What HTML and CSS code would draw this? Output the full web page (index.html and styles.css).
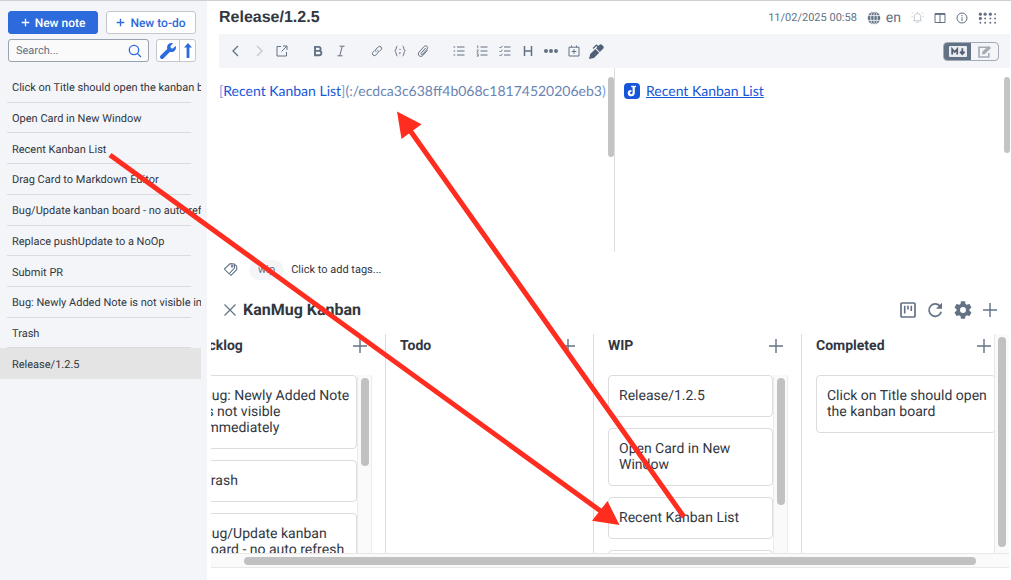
FILE: index.html
```html
<!DOCTYPE html>
<html lang="en">
<head>
<meta charset="utf-8">
<title>Release/1.2.5</title>
<link rel="stylesheet" href="styles.css">
</head>
<body>
<div class="app">
  <aside class="sidebar">
    <div class="new-row">
      <button class="btn primary"><svg viewBox="0 0 10 10"><path d="M5 .8v8.4M.8 5h8.4"/></svg>New note</button>
      <button class="btn"><svg viewBox="0 0 10 10"><path d="M5 .8v8.4M.8 5h8.4"/></svg>New to-do</button>
    </div>
    <div class="search-row">
      <label class="search">
        <input type="text" placeholder="Search..." aria-label="Search">
        <svg viewBox="0 0 14 14"><circle cx="6" cy="6" r="4.7"/><path d="M9.4 9.4l3.6 3.6"/></svg>
      </label>
      <div class="sort">
        <button aria-label="Sort field"><svg class="wrench" viewBox="0 0 512 512"><path d="M507.730 109.100c-2.240-9.030-13.540-12.090-20.120-5.510l-74.360 74.360-67.880-11.310-11.310-67.880 74.360-74.360c6.620-6.620 3.430-17.900-5.660-20.160-47.380-11.740-99.550.91-136.580 37.930-39.640 39.640-50.550 97.100-34.050 147.200L18.740 402.760c-24.990 24.990-24.990 65.510 0 90.500s65.510 24.990 90.500 0l213.210-213.210c50.120 16.710 107.470 5.680 147.370-34.220 37.070-37.070 49.700-89.320 37.910-136.730z"/></svg></button>
        <button aria-label="Reverse sort order"><svg class="up" viewBox="0 0 8 15"><path d="M4 0l4 4.600H5.400V15H2.600V4.600H0z"/></svg></button>
      </div>
    </div>
    <nav class="notes">
      <a href="#"><span>Click on Title should open the kanban board</span></a>
      <a href="#"><span>Open Card in New Window</span></a>
      <a href="#"><span>Recent Kanban List</span></a>
      <a href="#"><span>Drag Card to Markdown Editor</span></a>
      <a href="#"><span>Bug/Update kanban board - no auto refresh</span></a>
      <a href="#"><span>Replace pushUpdate to a NoOp</span></a>
      <a href="#"><span>Submit PR</span></a>
      <a href="#"><span>Bug: Newly Added Note is not visible immediately</span></a>
      <a href="#"><span>Trash</span></a>
      <a href="#" class="selected"><span>Release/1.2.5</span></a>
    </nav>
  </aside>

  <main class="main">
    <header class="title-row">
      <h1>Release/1.2.5</h1>
      <div class="meta">
        <time>11/02/2025 00:58</time>
        <button class="lang"><svg class="globe" viewBox="0 0 14 14"><circle cx="7" cy="7" r="6.700" fill="#627184"/><path d="M7 0v14M0 4.600h14M0 9.400h14" /><ellipse cx="7" cy="7" rx="3.300" ry="6.800"/></svg>en</button>
        <button class="bell" aria-label="Alarm"><svg viewBox="0 0 14 14"><path d="M2.500 10.500h9M3.600 10.500V6a3.400 3.400 0 0 1 6.800 0v4.500M7 2.500V1.300M5.900 11.500a1.100 1.100 0 0 0 2.200 0M2.300 1.500L1 3M11.700 1.500L13 3M1.200 5.200v1.500M12.800 5.200v1.500"/></svg></button>
        <button aria-label="Toggle layout"><svg viewBox="0 0 12 12"><path d="M1 1.500h10v9H1zM6 1.500v9M1 2.400h10"/></svg></button>
        <button aria-label="Note properties"><svg viewBox="0 0 12 12"><circle cx="6" cy="6" r="5"/><path d="M6 5.300V9M6 3v1.300"/></svg></button>
        <button class="dots" aria-label="Plugins"><svg viewBox="0 0 20 12"><g fill="#627184" stroke="none"><circle cx="2.500" cy="2" r="1.700"/><circle cx="7.500" cy="2" r="1.700"/><circle cx="13" cy="2" r="1.700"/><circle cx="18" cy="2" r="1"/><circle cx="2.500" cy="6.500" r="1.700"/><circle cx="7.500" cy="6.500" r="1"/><circle cx="13" cy="6.500" r="1"/><circle cx="18" cy="6.500" r="1"/><circle cx="2.500" cy="11" r="1"/><circle cx="7.500" cy="11" r="1"/><circle cx="13" cy="11" r="1"/><circle cx="18" cy="11" r="1"/></g></svg></button>
      </div>
    </header>

    <div class="toolbar">
      <div class="group">
        <button aria-label="Back"><svg viewBox="0 0 12 12"><path stroke-width="1.300" d="M8 1L3 6l5 5"/></svg></button>
        <button class="off" aria-label="Forward"><svg viewBox="0 0 12 12"><path stroke-width="1.300" d="M4 1l5 5-5 5"/></svg></button>
        <button aria-label="External editing"><svg viewBox="0 0 12 12"><path d="M5 1.500H1v9.500h9.500V7M7 1h4v4M11 1L5.500 6.500"/></svg></button>
      </div>
      <div class="group">
        <button aria-label="Bold"><svg viewBox="0 0 12 12"><path stroke-width="1.900" d="M3 1.900h3.600a2 2 0 0 1 0 4H3zM3 5.900h4.200a2.100 2.100 0 0 1 0 4.300H3z"/></svg></button>
        <button aria-label="Italic"><svg viewBox="0 0 12 12"><path d="M4.500 1.200h5M2.500 10.800h5M7.300 1.200L4.700 10.800"/></svg></button>
      </div>
      <div class="group">
        <button aria-label="Hyperlink"><svg viewBox="0 0 12 12"><path d="M5.200 6.800a2 2 0 0 1 0-2.800l2.200-2.200a2 2 0 0 1 2.800 2.800L8.300 6.500M6.800 5.200a2 2 0 0 1 0 2.800l-2.200 2.200a2 2 0 0 1-2.800-2.800l1.900-1.900"/></svg></button>
        <button aria-label="Code"><svg viewBox="0 0 12 12"><path d="M3.500 1C1.500 1 3 5.200.700 6 3 6.800 1.500 11 3.500 11M8.500 1c2 0 .5 4.200 2.800 5-2.300.8-.8 5-2.800 5M6 3.800v1.200M6 7v1.200l-.6 1"/></svg></button>
        <button aria-label="Attach file"><svg viewBox="0 0 12 12"><path d="M8.700 3L4.200 8.100a.9.900 0 0 0 1.400 1.200l4.700-5.400A2 2 0 0 0 7.300 1.300L2 7.200a2.500 2.500 0 0 0 3.700 3.400l4.800-5.400"/></svg></button>
      </div>
      <div class="group">
        <button aria-label="Bulleted list"><svg viewBox="0 0 12 12"><path d="M4 2h7.500M4 6h7.500M4 10h7.500M.5 2h1.700M.5 6h1.700M.5 10h1.700"/></svg></button>
        <button aria-label="Numbered list"><svg viewBox="0 0 12 12"><path d="M4.500 2h7M4.500 6h7M4.500 10h7"/><path stroke-width=".8" d="M1 .8h.8v2.400M.8 4.900h1.400v1L.8 7.200h1.600M.8 8.900h1.400v2.300H.8M1.200 10h1"/></svg></button>
        <button aria-label="Checkbox list"><svg viewBox="0 0 12 12"><path d="M5 2h6.500M5 6h6.500M5 10h6.500M.5 2l1 1 2-2.200M.5 6l1 1 2-2.200M.5 10l1 1 2-2.200"/></svg></button>
        <button aria-label="Heading"><svg viewBox="0 0 12 12"><path stroke-width="1.500" d="M2.500 1v10M9.500 1v10M2.500 6h7"/></svg></button>
        <button aria-label="Horizontal rule"><svg class="wide" viewBox="0 0 14 12"><g fill="#627184" stroke="none"><circle cx="2" cy="6" r="2"/><circle cx="7" cy="6" r="2"/><circle cx="12" cy="6" r="2"/></g></svg></button>
        <button aria-label="Insert time"><svg viewBox="0 0 12 12"><path d="M1 2.200h10V11H1zM3.500.5v1.700M8.500.5v1.700M6 4.200v4.600M3.700 6.500h4.600"/></svg></button>
        <button aria-label="Edit drawing"><svg class="marker" viewBox="0 0 15 15"><path fill="#4f6177" stroke="none" d="M0 15l1.200-5L6.300 4.900l3.900 3.900L5 13.900zM7 4.200l1.300-1.300-.9-.9-2.900 2.900-.9-.9L6.900.7a.8.800 0 0 1 1.100 0l1.300 1.200 1-1a2 2 0 0 1 2.800 0l1 1a2 2 0 0 1 0 2.800l-3.200 3.400z"/></svg></button>
      </div>
      <div class="toggle">
        <button class="on" aria-label="Markdown editor"><svg viewBox="0 0 18 11"><rect width="18" height="11" rx="1" fill="#e9edf2"/><path stroke="#536173" stroke-width="1.800" d="M3.200 8.500V3.200L5.700 6l2.500-2.800v5.300M13.300 2.300v5.500M11 5.700l2.300 2.500 2.300-2.500"/></svg></button>
        <button aria-label="Rich text editor"><svg viewBox="0 0 14 13"><path stroke="#a4abb6" stroke-width="1.600" d="M9 2.200H1v9.800h9.800V8"/><path fill="#a4abb6" d="M4 9.500l.5-3L10.500.700l2.500 2.400-6 5.900z"/></svg></button>
      </div>
    </div>

    <section class="panes">
      <div class="pane source">
        <p><span class="br">[</span><span class="lk">Recent Kanban List</span><span class="br">]</span><span class="url">(:/ecdca3c638ff4b068c18174520206eb3</span><span class="br">)</span></p>
        <i class="thumb"></i>
      </div>
      <div class="pane preview">
        <p><svg class="joplin" viewBox="0 0 16 16"><rect width="16" height="16" rx="4" fill="#1656d8"/><path fill="none" stroke="#fff" stroke-width="2.200" d="M9.700 3.500v6.300c0 3.200-4.700 3.200-4.900.4 0-1.600 1.200-2.300 2.600-2.200"/><path stroke="#fff" stroke-width="1.400" d="M7.200 3.500h4.800"/></svg><a href="#">Recent Kanban List</a></p>
        <i class="thumb"></i>
      </div>
    </section>

    <div class="tags">
      <svg viewBox="0 0 14 14"><path d="M1.500 6.300L6.800 1.500l3.700.3.300 3.700L5.700 11 1.500 6.800zM11 2.500l1.700 1.200.2 3.300-5.400 5.500-1.200-1"/><circle cx="8.500" cy="4" r=".7"/></svg>
      <span class="tag">wip</span>
      <button>Click to add tags...</button>
    </div>

    <section class="kanban">
      <header class="kb-head">
        <button aria-label="Close"><svg class="x" viewBox="0 0 14 14"><path d="M1.500 1.500l11 11M12.500 1.500l-11 11"/></svg></button>
        <h2>KanMug Kanban</h2>
        <div class="kb-actions">
          <button aria-label="Boards"><svg viewBox="0 0 16 16"><rect x="1" y="1" width="14" height="14" rx="1" stroke-width="1.700"/><path stroke-width="1.600" d="M4.700 3.800v7.800M8 3.800v3.600M11.300 3.800v5.200"/></svg></button>
          <button aria-label="Refresh"><svg viewBox="0 0 16 16"><path stroke-width="1.700" d="M13.300 4.500A6.200 6.200 0 1 0 14.200 9.800"/><path fill="#627184" stroke="none" d="M15 .8v6H9z"/></svg></button>
          <button aria-label="Settings"><svg class="gear" viewBox="2 2 20 20"><path fill="#627184" stroke="none" d="M19.140 12.940c.04-.3.06-.61.06-.94s-.02-.64-.07-.94l2.030-1.580a.49.490 0 0 0 .12-.61l-1.920-3.320a.49.490 0 0 0-.59-.22l-2.390.96c-.5-.38-1.030-.7-1.620-.94l-.36-2.540a.48.480 0 0 0-.48-.41h-3.840c-.24 0-.43.17-.47.41l-.36 2.540c-.59.24-1.130.57-1.620.94l-2.390-.96a.48.480 0 0 0-.59.22L2.740 8.870c-.12.21-.08.47.12.61l2.030 1.580c-.05.3-.09.63-.09.94s.02.64.07.94l-2.030 1.580a.49.490 0 0 0-.12.61l1.920 3.320c.12.22.37.29.59.22l2.390-.96c.5.38 1.030.7 1.620.94l.36 2.540c.05.24.24.41.48.41h3.840c.24 0 .44-.17.47-.41l.36-2.540c.59-.24 1.130-.56 1.620-.94l2.390.96c.22.080.47 0 .59-.22l1.920-3.320a.48.480 0 0 0-.12-.61zM12 15.300a3.300 3.300 0 1 1 0-6.600 3.300 3.300 0 0 1 0 6.600z"/></svg></button>
          <button aria-label="Add"><svg viewBox="0 0 14 14"><path d="M7 0v14M0 7h14"/></svg></button>
        </div>
      </header>
      <div class="board-wrap">
        <div class="board">
          <div class="cols">
            <section class="col">
              <header><h3>Backlog</h3><button aria-label="Add card"><svg viewBox="0 0 14 14"><path d="M7 0v14M0 7h14"/></svg></button></header>
              <div class="cards scroll">
                <div class="stack">
                  <article>Bug: Newly Added Note is not visible immediately</article>
                  <article>Trash</article>
                  <article>Bug/Update kanban board - no auto refresh</article>
                </div>
                <div class="track"><i class="short"></i></div>
              </div>
            </section>
            <section class="col">
              <header><h3>Todo</h3><button aria-label="Add card"><svg viewBox="0 0 14 14"><path d="M7 0v14M0 7h14"/></svg></button></header>
            </section>
            <section class="col">
              <header><h3>WIP</h3><button aria-label="Add card"><svg viewBox="0 0 14 14"><path d="M7 0v14M0 7h14"/></svg></button></header>
              <div class="cards scroll">
                <div class="stack">
                  <article>Release/1.2.5</article>
                  <article>Open Card in New Window</article>
                  <article>Recent Kanban List</article>
                  <article>Drag Card to Markdown Editor</article>
                </div>
                <div class="track"><i class="long"></i></div>
              </div>
            </section>
            <section class="col">
              <header><h3>Completed</h3><button aria-label="Add card"><svg viewBox="0 0 14 14"><path d="M7 0v14M0 7h14"/></svg></button></header>
              <div class="cards">
                <div class="stack"><article>Click on Title should open the kanban board</article></div>
              </div>
            </section>
          </div>
        </div>
        <div class="vbar"><i></i></div>
        <div class="hbar"><i></i></div>
      </div>
    </section>
  </main>

  <svg class="arrows" viewBox="0 0 1011 580" preserveAspectRatio="xMinYMin meet">
    <path class="shaft" d="M110 155L602 512M684 517L409 129"/>
    <path class="head" d="M619.500 525L592 520.700 607.500 501zM397 111.500L421.500 124.300 401.500 139z"/>
  </svg>
</div>
</body>
</html>
```
FILE: styles.css
```css
* { box-sizing: border-box; }
body { margin: 0; background: #fff; color: #32373f; font-family: Roboto, "Liberation Sans", sans-serif; font-size: 14px; text-rendering: geometricPrecision; }
button { margin: 0; padding: 0; border: 0; background: none; font: inherit; color: inherit; text-rendering: inherit; display: flex; align-items: center; justify-content: center; }
h1, h2, h3, p { margin: 0; }
svg { display: block; fill: none; stroke: #627184; flex: none; }

.app { position: relative; display: flex; height: 100vh; border-top: 1px solid #cfcfd2; overflow: hidden; }

/* Sidebar */
.sidebar { width: 207px; flex: none; background: #f4f5f8; padding-top: 10px; }
.new-row { display: flex; gap: 8px; padding: 0 11px 0 8px; }
.btn { flex: 1; height: 23px; gap: 5px; border: 1px solid #c4c7cc; border-radius: 3px; background: #fff; color: #2d6bdc; font-size: 12px; font-weight: 500; }
.btn svg { width: 9px; height: 9px; stroke: #2d6bdc; stroke-width: 1.5; }
.btn.primary { background: #2d6bdc; border-color: #2d6bdc; color: #fff; }
.btn.primary svg { stroke: #fff; }
.search-row { display: flex; gap: 7px; padding: 5px 11px 0 8px; }
.search { display: flex; align-items: center; flex: 1; min-width: 0; height: 23px; padding: 0 6px 0 7px; border: 1px solid #98a2b0; border-radius: 3px; background: #fafafb; }
.search input { flex: 1; min-width: 0; padding: 0; border: 0; outline: 0; background: none; font: 11px Roboto, sans-serif; color: #627184; text-rendering: inherit; }
.search input::placeholder { color: #627184; opacity: 1; }
.search svg { width: 14px; height: 14px; stroke: #2d6bdc; stroke-width: 1.3; }
.sort { display: flex; height: 23px; border: 1px solid #c4c7cc; border-radius: 3px; background: #fff; }
.sort button { width: 15px; }
.sort button:first-child { width: 23px; border-right: 1px solid #c4c7cc; }
.sort svg { fill: #2d6bdc; stroke: none; }
.wrench { width: 16px; height: 16px; }
.up { width: 8px; height: 15px; }
.notes { display: grid; grid-auto-rows: 1fr; min-height: 307px; margin: 10px 6px 0 0; }
.notes a { display: flex; padding: 0 0 0 7px; color: #32373f; font-size: 11px; text-decoration: none; overflow: hidden; }
.notes span { display: flex; align-items: center; width: 184px; padding: 2px 0 0 5px; border-bottom: 1px solid #dadbde; white-space: nowrap; }
.notes .selected { background: #e4e4e4; }
.notes .selected span { border-color: transparent; }

/* Note header */
.main { flex: 1; min-width: 0; display: flex; flex-direction: column; }
.title-row { display: flex; align-items: center; justify-content: space-between; height: 33px; padding: 0 14px 0 12px; }
h1 { font: bold 16px/20px "Liberation Sans", Arial, sans-serif; }
.meta { display: flex; align-items: center; gap: 10px; color: #627184; }
.meta time { font-size: 11px; }
.meta svg { width: 12px; height: 12px; }
.lang { gap: 5px; font-size: 14px; }
.meta .globe { width: 14px; height: 14px; stroke: #fff; stroke-width: .8; }
.bell { opacity: .4; }
.meta .bell svg { width: 13px; height: 13px; }
.meta .dots svg { width: 19px; height: 12px; }
.toolbar { display: flex; align-items: center; gap: 13px; height: 34px; margin: 0 1px 0 12px; padding: 0 11px 0 5px; background: #f4f5f8; }
.group { display: flex; }
.group button { width: 23px; height: 24px; }
.group svg { width: 12px; height: 12px; }
.group .wide { width: 14px; }
.group .marker { width: 15px; height: 15px; }
.off { opacity: .35; }
.toggle { display: flex; margin-left: auto; border: 1px solid #a4abb6; border-radius: 4px; overflow: hidden; }
.toggle button { width: 27px; height: 17px; }
.toggle .on { background: #627184; }
.toggle svg { width: 14px; height: 13px; stroke: none; }
.toggle .on svg { width: 18px; height: 11px; }

/* Editor and preview */
.panes { display: flex; height: 184px; padding-left: 12px; font: 14px Lato, sans-serif; }
.pane { position: relative; width: 50%; padding-top: 13px; white-space: nowrap; }
.pane p { line-height: 20px; }
.source { border-right: 1px solid #dcdcdc; }
.br { color: #7b9ce6; }
.lk { color: #1656d8; }
.url { color: #6a84b3; }
.preview { padding-left: 9px; }
.preview p { display: flex; align-items: center; gap: 6px; }
.preview a { color: #1656d8; }
.joplin { width: 16px; height: 16px; stroke: none; }
.thumb { position: absolute; right: 0; top: 9px; width: 6px; height: 80px; border-radius: 3px; background: #c4c4c4; }
.preview .thumb { right: 1px; height: 76px; }

.tags { display: flex; align-items: center; height: 35px; padding-left: 16px; font-size: 11px; }
.tags svg { width: 15px; height: 15px; }
.tag { margin: 0 7px 0 11px; padding: 0 9px; border-radius: 10px; background: #f4f5f8; color: #627184; line-height: 20px; }

/* Kanban */
.kanban { padding-left: 4px; margin-top: 7px; }
.kb-head { display: flex; align-items: center; height: 31px; padding: 0 14px 0 12px; }
.x { width: 14px; height: 14px; stroke-width: 1.2; }
h2 { margin-left: 6px; font-size: 16px; font-weight: 700; }
.kb-actions { display: flex; align-items: center; gap: 11px; margin-left: auto; }
.kb-actions svg { width: 16px; height: 16px; stroke-width: 1.4; }
.kb-actions .gear { width: 18px; height: 18px; }
.kb-actions button:last-child svg { width: 14px; height: 14px; }
.board-wrap { display: grid; grid-template-columns: minmax(0, 1fr) 15px; margin-right: 2px; margin-top: 9px; }
.board { height: 219px; overflow: hidden; }
.cols { display: flex; height: 100%; margin-left: -33px; }
.col { width: 208px; flex: none; padding-left: 14px; border-right: 1px solid #dcdcdc; }
.col header { display: flex; align-items: center; justify-content: space-between; height: 24px; padding-right: 18px; }
.col h3 { font-size: 14px; font-weight: 700; }
.col header svg { width: 14px; height: 14px; stroke-width: 1.4; }
.cards { display: flex; margin-top: 17px; height: 178px; }
.stack { display: flex; flex-direction: column; gap: 11px; width: 180px; flex: none; }
.scroll .stack { width: 165px; overflow: hidden; }
article { flex: none; padding: 12px 4px 12px 10px; border: 1px solid #dcdcdc; border-radius: 4px; line-height: 16px; }
.track { width: 15px; padding: 3px 0 0 3px; border: solid #ececec; border-width: 0 1px; background: #fafafa; }
.track i { display: block; width: 8px; border-radius: 4px; background: #c1c1c1; }
.short { height: 88px; }
.long { height: 127px; }
.vbar { padding: 3px 0 0 3px; border-left: 1px solid #e8e8e8; background: #fafafa; }
.vbar i { display: block; width: 8px; height: 210px; border-radius: 4px; background: #c1c1c1; }
.hbar { grid-column: 1 / 3; height: 15px; padding: 3px 33px; border: solid #e8e8e8; border-width: 1px 0; background: #fafafa; }
.hbar i { display: block; height: 8px; border-radius: 4px; background: #c1c1c1; }

/* Annotation arrows lie over the whole page */
.arrows { position: absolute; left: 0; top: -1px; width: 1011px; height: 580px; pointer-events: none; }
.shaft { stroke: #ff2d20; stroke-width: 5; }
.head { fill: #ff2d20; stroke: none; }
```
